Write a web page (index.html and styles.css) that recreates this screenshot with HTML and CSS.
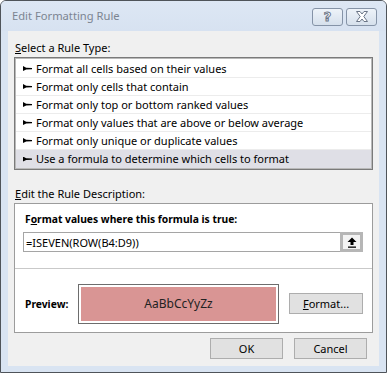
FILE: index.html
```html
<!DOCTYPE html>
<html lang="en">

<head>
  <meta charset="UTF-8">
  <meta name="viewport" content="width=device-width, initial-scale=1.0">
  <title>Edit Formatting Rule</title>
  <link rel="stylesheet" href="styles.css">
</head>

<body>

  <div class="window">
    <div class="title-bar">
      <span class="title-text">Edit Formatting Rule</span>
      <div class="title-buttons">
        <button class="title-btn help">?</button>
        <button class="title-btn close">
          <svg width="16" height="11" viewBox="0 0 16 11">
            <path d="M2.5 0.5 H6 L8 3 L10 0.5 H13.5 L9.8 5.5 L13.5 10.5 H10 L8 8 L6 10.5 H2.5 L6.2 5.5 Z"
              fill="#fff" stroke="#6a7587" stroke-width="1" stroke-linejoin="round" />
          </svg>
        </button>
      </div>
    </div>

    <div class="client">
      <div class="label"><u>S</u>elect a Rule Type:</div>
      <div class="rule-list">
        <div class="rule-item"><span class="rule-arrow"></span>Format all cells based on their values</div>
        <div class="rule-item"><span class="rule-arrow"></span>Format only cells that contain</div>
        <div class="rule-item"><span class="rule-arrow"></span>Format only top or bottom ranked values</div>
        <div class="rule-item"><span class="rule-arrow"></span>Format only values that are above or below average</div>
        <div class="rule-item"><span class="rule-arrow"></span>Format only unique or duplicate values</div>
        <div class="rule-item selected"><span class="rule-arrow"></span>Use a formula to determine which cells to format</div>
      </div>

      <div class="label desc-label"><u>E</u>dit the Rule Description:</div>
      <div class="desc-panel">
        <div class="desc-top">
          <div class="desc-heading">F<u>o</u>rmat values where this formula is true:</div>
          <div class="formula-box">
            <span class="formula-text">=ISEVEN(ROW(B4:D9))</span>
            <span class="collapse-btn">
              <svg width="10" height="11" viewBox="0 0 10 11">
                <path d="M5 0.5 L9.5 5 H6.5 V8 H3.5 V5 H0.5 Z" fill="#000" />
                <rect x="1" y="9.5" width="8" height="1.3" fill="#000" />
              </svg>
            </span>
          </div>
        </div>
        <div class="desc-bottom">
          <span class="preview-label">Preview:</span>
          <div class="preview-box">
            <div class="preview-fill">AaBbCcYyZz</div>
          </div>
          <button class="btn format-btn"><u>F</u>ormat...</button>
        </div>
      </div>

      <div class="dialog-buttons">
        <button class="btn">OK</button>
        <button class="btn">Cancel</button>
      </div>
    </div>
  </div>

</body>

</html>
```

FILE: styles.css
```css
/* Page */
body {
  margin: 0;
  padding: 0;
  width: 387px;
  height: 373px;
  overflow: hidden;
  background: #fff;
  font-family: "Noto Sans", "Open Sans", sans-serif;
  font-size: 11px;
  color: #000;
}

/* Outer window frame */
.window {
  width: 387px;
  height: 373px;
  box-sizing: border-box;
  border: 1px solid #4f545a;
  border-radius: 6px 6px 0 0;
  background: #d9e4f2;
  padding: 0 7px 6px 7px;
  display: flex;
  flex-direction: column;
}

/* Title bar */
.title-bar {
  height: 30px;
  display: flex;
  align-items: center;
  justify-content: space-between;
  background: linear-gradient(#dde7f4, #d7e2f1);
  margin: 0 -7px;
  padding: 0 9px 0 11px;
  border-radius: 5px 5px 0 0;
}

.title-text {
  font-size: 11.2px;
  color: #7c8491;
  margin-top: -1px;
}

.title-buttons {
  display: flex;
  gap: 3px;
  margin-top: 1px;
}

.title-btn {
  width: 31px;
  height: 18px;
  box-sizing: border-box;
  border: 1px solid #8593a7;
  border-radius: 3px;
  background: linear-gradient(#eef3f9, #d6e0ec);
  padding: 0;
  display: flex;
  align-items: center;
  justify-content: center;
}

.title-btn.help {
  font-family: "DejaVu Sans", sans-serif;
  font-size: 13px;
  font-weight: bold;
  color: #fff;
  -webkit-text-stroke: 1px #6a7587;
  line-height: 16px;
}

/* Client area */
.client {
  flex: 1;
  background: #f0f0f0;
  padding: 10px 6px 0 6px;
  display: flex;
  flex-direction: column;
}

.label {
  height: 14px;
  line-height: 14px;
  margin: 0 0 2px 1px;
}

.desc-label {
  margin-top: 17px;
}

/* Rule type list */
.rule-list {
  background: #fff;
  border: 1px solid #7a7a7a;
  box-shadow: inset 0 0 0 1px #b9b9b9;
  padding: 2px 1px 1px 1px;
}

.rule-item {
  height: 18px;
  box-sizing: border-box;
  line-height: 17px;
  border-bottom: 1px solid #ececec;
  display: flex;
  align-items: center;
  padding-left: 7px;
  white-space: nowrap;
}

.rule-item.selected {
  background: #dfdfe6;
  border-bottom: none;
  line-height: 18px;
}

.rule-arrow {
  width: 9px;
  height: 5px;
  margin-right: 4px;
  background: #000;
  clip-path: polygon(0 0, 35% 35%, 100% 40%, 100% 65%, 35% 70%, 0 100%);
}

/* Description panel */
.desc-panel {
  background: #fff;
  border: 1px solid #9c9c9c;
  height: 130px;
  box-sizing: border-box;
  display: flex;
  flex-direction: column;
}

.desc-top {
  padding: 8px 9px 0 8px;
  height: 65px;
  box-sizing: border-box;
  border-bottom: 1px solid #c9c9c9;
}

.desc-heading {
  font-weight: bold;
  font-size: 10.3px;
  height: 14px;
  line-height: 14px;
  margin-left: 2px;
}

.formula-box {
  margin-top: 6px;
  height: 20px;
  box-sizing: border-box;
  border: 1px solid #a5a5a5;
  display: flex;
  align-items: center;
  justify-content: space-between;
}

.formula-text {
  padding-left: 2px;
}

.collapse-btn {
  width: 23px;
  height: 20px;
  margin: -1px -1px -1px 0;
  box-sizing: border-box;
  border: 3px solid #b6b6b6;
  background: #f3f3f3;
  display: flex;
  align-items: center;
  justify-content: center;
}

.desc-bottom {
  flex: 1;
  display: flex;
  align-items: center;
  padding: 10px 9px 4px 10px;
}

.preview-label {
  font-weight: bold;
  font-size: 10.3px;
  width: 53px;
}

.preview-box {
  width: 201px;
  height: 40px;
  box-sizing: border-box;
  border: 1px solid #6d6d6d;
  padding: 2px;
  background: #fff;
}

.preview-fill {
  height: 100%;
  background: #d99594;
  display: flex;
  align-items: center;
  justify-content: center;
  font-size: 12px;
  color: #222;
}

/* Buttons */
.btn {
  width: 73px;
  height: 21px;
  box-sizing: border-box;
  border: 1px solid #adadad;
  background: #e1e1e1;
  font-family: inherit;
  font-size: 11px;
  color: #000;
  padding: 0;
}

.format-btn {
  margin-left: 10px;
  width: 74px;
}

.dialog-buttons {
  display: flex;
  justify-content: flex-end;
  gap: 11px;
  margin-top: 5px;
  padding-right: 6px;
}
```
